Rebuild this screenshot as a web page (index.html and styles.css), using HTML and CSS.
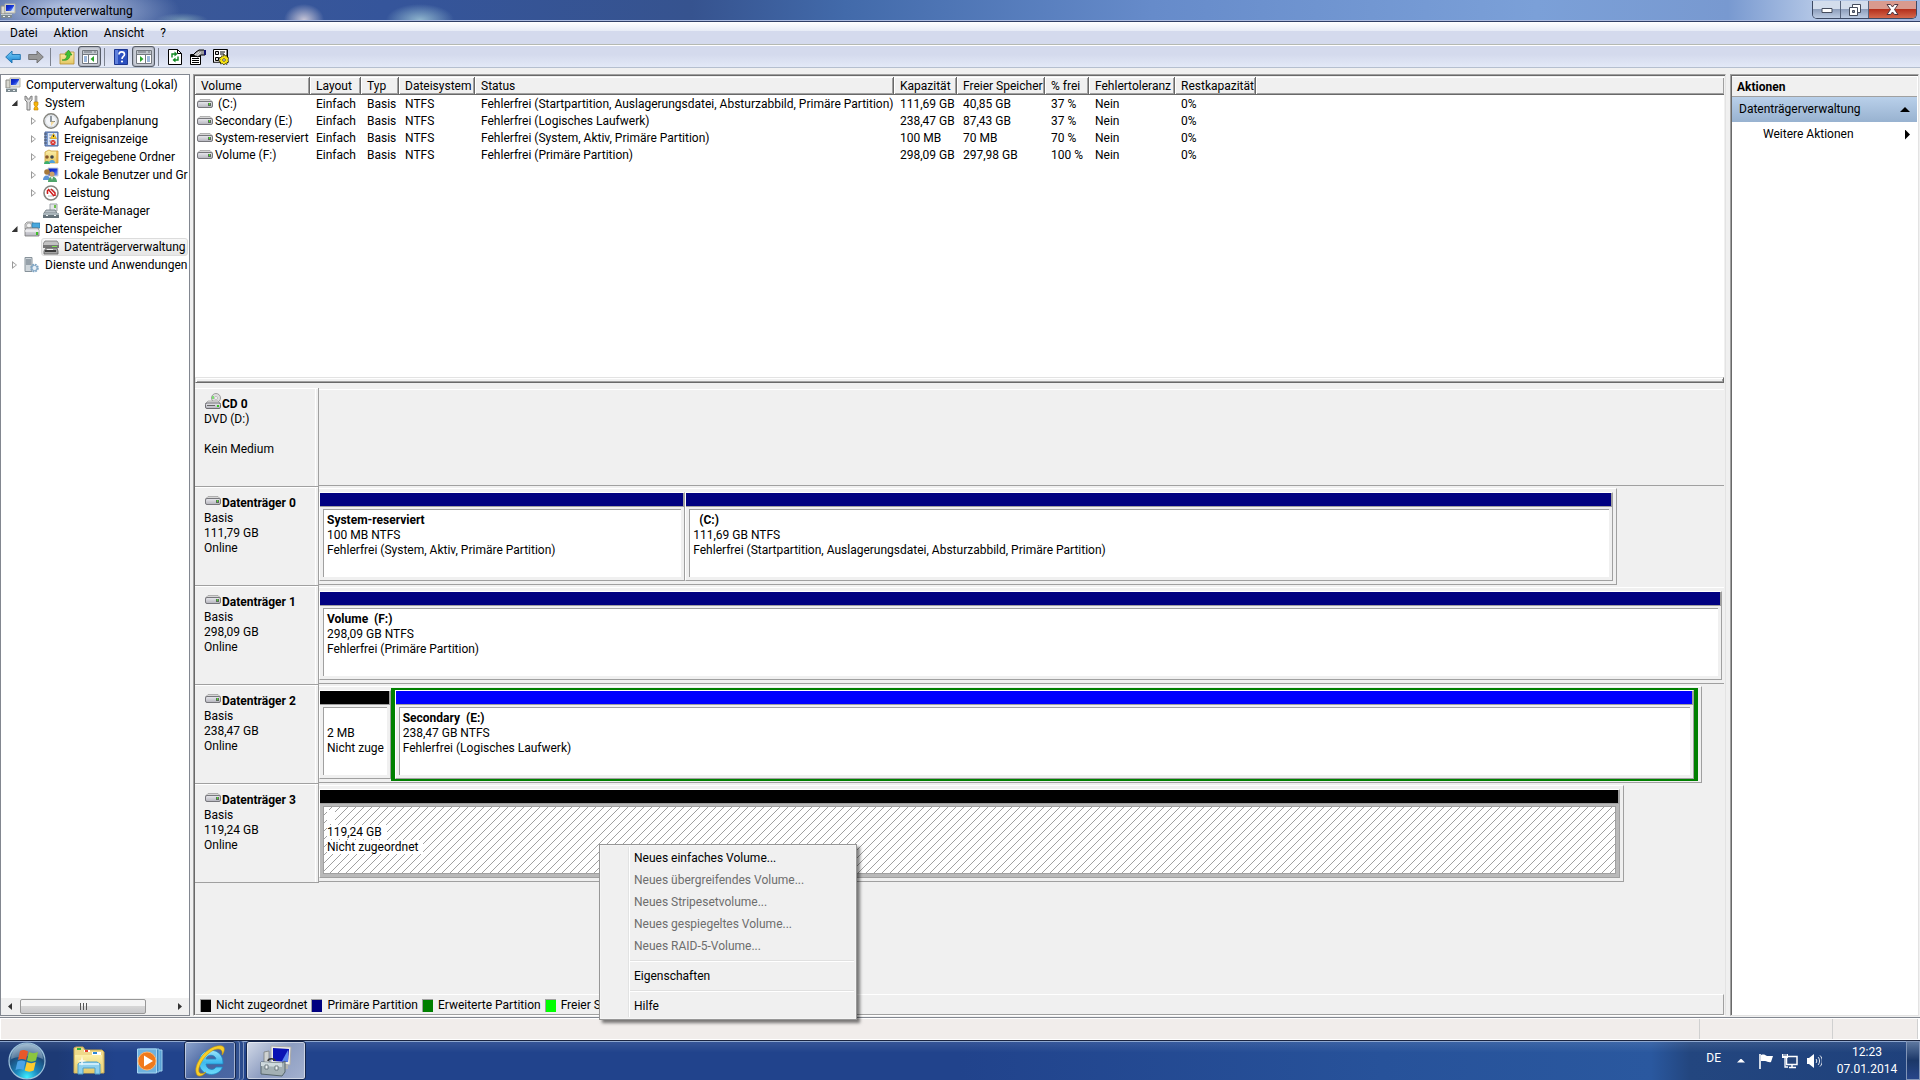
FILE: index.html
```html
<!DOCTYPE html>
<html lang="de">
<head>
  <meta charset="utf-8">
  <title>Computerverwaltung</title>
  <link rel="stylesheet" href="styles.css">
</head>
<body>
  <!-- icon sprite -->
  <svg class="sprite" aria-hidden="true">
    <defs>
      <linearGradient id="gBlue" x1="0" y1="0" x2="1" y2="1">
        <stop offset="0" stop-color="#0a1fb0"/><stop offset=".5" stop-color="#1636d8"/><stop offset="1" stop-color="#8fb4f5"/>
      </linearGradient>
      <linearGradient id="gArrow" x1="0" y1="0" x2="0" y2="1">
        <stop offset="0" stop-color="#7fd0f7"/><stop offset="1" stop-color="#1483d2"/>
      </linearGradient>
      <linearGradient id="gDrive" x1="0" y1="0" x2="0" y2="1">
        <stop offset="0" stop-color="#e9e9ee"/><stop offset="1" stop-color="#b4b4bc"/>
      </linearGradient>
      <linearGradient id="gFolder" x1="0" y1="0" x2="0" y2="1">
        <stop offset="0" stop-color="#fdf0a8"/><stop offset="1" stop-color="#e3c766"/>
      </linearGradient>
      <radialGradient id="gOrb" cx=".5" cy=".95" r=".9">
        <stop offset="0" stop-color="#3ff0ff"/><stop offset=".35" stop-color="#1b86bd"/><stop offset=".7" stop-color="#1c4c7c"/><stop offset="1" stop-color="#7fa3c0"/>
      </radialGradient>
      <linearGradient id="gIe" x1="0" y1="0" x2="0" y2="1">
        <stop offset="0" stop-color="#9fe6fb"/><stop offset=".5" stop-color="#3db9ee"/><stop offset="1" stop-color="#6fdcfa"/>
      </linearGradient>
    </defs>
    <symbol id="i-computer" viewBox="0 0 16 16">
      <path d="M1 3h4v8H1z" fill="#d8d8d0" stroke="#8a8a85"/>
      <path d="M5 1h10v9H5z" fill="#e4e4dc" stroke="#b4b4a8"/>
      <path d="M6 2h8v6H6z" fill="url(#gBlue)"/>
      <path d="M11 8l3-5v5z" fill="#c4d8fa"/>
      <path d="M1 11h11v4H1z" fill="#7d8a90"/>
      <path d="M1 11h11v1H1z" fill="#c3cdd0"/>
      <path d="M3 13h2v1H3zM8 13h2v1H8z" fill="#e8eef0"/>
    </symbol>
    <symbol id="i-tools" viewBox="0 0 16 16">
      <path d="M1 1v4l2 2v8h3V7l2-2V1L6 2v2H3V2z" fill="#dcdcdc" stroke="#7c7c7c"/>
      <path d="M11 1h2v6h-2z" fill="#b5b5b5" stroke="#8b8b8b" stroke-width=".6"/>
      <path d="M10 7h4v3l-1 1v1l1 1v2h-4v-2l1-1v-1l-1-1z" fill="#f5b50c" stroke="#c07e00" stroke-width=".6"/>
    </symbol>
    <symbol id="i-clock" viewBox="0 0 16 16">
      <circle cx="8" cy="8" r="7.2" fill="#f3f5f8" stroke="#85857f" stroke-width="1.4"/>
      <circle cx="8" cy="8" r="5.6" fill="none" stroke="#cfd5dc" stroke-width=".8"/>
      <path d="M8 3v5.500H12" fill="none" stroke="#4d5a68" stroke-width="1.200"/>
      <path d="M8 8.500h4L8 13z" fill="#f4dba0"/>
    </symbol>
    <symbol id="i-event" viewBox="0 0 16 16">
      <path d="M2 1h13v14H2z" fill="#7d9cd0" stroke="#4a659c"/>
      <path d="M5 2h9v12H5z" fill="#dfe8f6"/>
      <path d="M6 4h3M6 7h2M6 10h2" stroke="#7088b0" stroke-width=".8"/>
      <path d="M1 3h3M1 6h3M1 9h3M1 12h3" stroke="#4d5563"/>
      <path d="M10.500 2.500l3 5h-6z" fill="#ffd21f" stroke="#c28a00" stroke-width=".6"/>
      <path d="M10.500 4v2" stroke="#333"/>
      <circle cx="10" cy="11.500" r="2.600" fill="#d62a24"/>
      <path d="M9 10.500l2 2m0-2l-2 2" stroke="#fff" stroke-width=".8"/>
    </symbol>
    <symbol id="i-shared" viewBox="0 0 16 16">
      <path d="M2 3l4-2 2 1h7v12H2z" fill="url(#gFolder)" stroke="#c79f3c" stroke-width=".8"/>
      <path d="M14 2v12" stroke="#e39a2a"/>
      <circle cx="4" cy="8" r="1.800" fill="#8a5a2c"/><circle cx="9" cy="8" r="1.800" fill="#3c434a"/>
      <path d="M1 15c0-4 6-4 6 0z" fill="#3cae6d"/><path d="M6 14c0-4 6-4 6 0z" fill="#4d9fdb"/>
    </symbol>
    <symbol id="i-users" viewBox="0 0 16 16">
      <path d="M5 1h10v8H5z" fill="url(#gBlue)" stroke="#c9ced6"/>
      <circle cx="4" cy="5" r="2.800" fill="#a6793c"/><circle cx="9" cy="7" r="2.600" fill="#caa069"/>
      <path d="M0 13c0-6 7-6 7 0z" fill="#5c93d8"/>
      <path d="M5 15c0-7 9-7 9 0z" fill="#4fa56a"/><path d="M8 10l1 3 1-3z" fill="#fff"/>
    </symbol>
    <symbol id="i-perf" viewBox="0 0 16 16">
      <circle cx="8" cy="8" r="7" fill="#fff" stroke="#85857f" stroke-width="1.600"/>
      <path d="M4 8c0-5 8-5 8 0M5 11h6" fill="none" stroke="#9aa" stroke-width=".8"/>
      <path d="M5 4l6 7M4.500 5v4M8 4l4 4v3" fill="none" stroke="#cf1d1d" stroke-width="1.500"/>
    </symbol>
    <symbol id="i-device" viewBox="0 0 16 16">
      <path d="M7 1h7v7H7z" fill="#e2e5e8" stroke="#9da3a8"/>
      <path d="M11 2h2v3h-2z" fill="#6cc04a"/>
      <path d="M3 7h9l2 3H1z" fill="#b9c2c8" stroke="#6c777e" stroke-width=".8"/>
      <path d="M0 10h16v5H0z" fill="#66737b"/><path d="M0 10h16v2H0z" fill="#a8b4ba"/>
      <path d="M3 12h2v1H3zM11 12h2v1h-2z" fill="#eef2f4"/>
    </symbol>
    <symbol id="i-storage" viewBox="0 0 16 16">
      <path d="M1 3l2-2h6v7H1z" fill="#dadada" stroke="#8d8d8d" stroke-width=".8"/>
      <circle cx="5" cy="4.500" r="2.500" fill="#f4f4f4" stroke="#999" stroke-width=".7"/>
      <path d="M8 2h8v5H8z" fill="#49a8dd" stroke="#2b79a8" stroke-width=".7"/>
      <path d="M1 9l1-2h12l1 2v6H1z" fill="url(#gDrive)" stroke="#777" stroke-width=".8"/>
      <path d="M1 10h14" stroke="#fff"/><path d="M12 11h2v3h-2z" fill="#3fbf2a"/>
    </symbol>
    <symbol id="i-diskmgmt" viewBox="0 0 16 16">
      <path d="M2 2h12l2 3v3H0V5z" fill="#c2c2c2" stroke="#777" stroke-width=".8"/>
      <path d="M0 6h16v3H0z" fill="#777"/><path d="M9 7h5v1H9z" fill="#7fe04f"/>
      <path d="M3 9h11l1 3v3H1v-3z" fill="#a5a5a5" stroke="#5b5b5b" stroke-width=".8"/>
      <path d="M2 11h11v2H2z" fill="#3d3d3d"/><path d="M4 10h6v1H4z" fill="#f0f0f0"/>
    </symbol>
    <symbol id="i-services" viewBox="0 0 16 16">
      <path d="M1 0.500h7v14H1z" fill="#cfd6db" stroke="#87929a"/>
      <path d="M2 3h5M2 5h5M2 7h5" stroke="#5f6d78"/>
      <circle cx="10.500" cy="11" r="3.200" fill="none" stroke="#7fa5c4" stroke-width="2.200" stroke-dasharray="1.700 .8"/>
      <circle cx="10.500" cy="11" r="2.600" fill="#e8f0f7" stroke="#7fa5c4"/>
    </symbol>
    <symbol id="i-drive" viewBox="0 0 16 9">
      <path d="M3 .5h10l2.500 2.500H.5z" fill="#d6d6d6" stroke="#a2a2a2" stroke-width=".8"/>
      <rect x=".5" y="2.500" width="15" height="6" rx="1.500" fill="url(#gDrive)" stroke="#77777c"/>
      <path d="M11 4h3v3h-3z" fill="#5c6b5c"/><path d="M12 4h1v2h-1z" fill="#4ee02c"/>
    </symbol>
    <symbol id="i-cd" viewBox="0 0 16 16">
      <circle cx="11" cy="5" r="4.500" fill="#dedede" stroke="#9d9d9d"/>
      <circle cx="11" cy="5" r="1.500" fill="#fff" stroke="#aaa" stroke-width=".7"/>
      <path d="M7 3h2v3H7z" fill="#7fdc74"/>
      <path d="M3 8h10l3 3H0z" fill="#e0e0e0" stroke="#999" stroke-width=".7"/>
      <rect x=".5" y="10" width="15" height="5.500" rx="1.500" fill="url(#gDrive)" stroke="#6d6d72"/>
      <path d="M2 12h8v1H2z" fill="#666"/><path d="M12 12h2v2h-2z" fill="#39c225"/>
    </symbol>
    <symbol id="i-back" viewBox="0 0 16 14">
      <path d="M.7 7L7 1v3.500h8.300v5H7V13z" fill="url(#gArrow)" stroke="#1c6fae" stroke-width=".9"/>
    </symbol>
    <symbol id="i-forward" viewBox="0 0 16 14">
      <path d="M15.300 7L9 1v3.500H.7v5H9V13z" fill="#989898" stroke="#6d6d6d" stroke-width=".9"/>
    </symbol>
    <symbol id="i-up" viewBox="0 0 16 16">
      <path d="M1 5h5l1-2h8v12H1z" fill="url(#gFolder)" stroke="#b88f32" stroke-width=".8"/>
      <path d="M3 11c3 0 5-2 5-5H6l3.500-5L13 6h-2c0 4-3 6-8 5z" fill="#3fc234" stroke="#1d8a1c" stroke-width=".6"/>
    </symbol>
    <symbol id="i-treepane" viewBox="0 0 16 14">
      <path d="M.5 .5h15v13H.5z" fill="#fff" stroke="#73787f"/>
      <path d="M1 1h14v3H1z" fill="#c0c5cc"/><path d="M2 2h8M12 2h2" stroke="#70757c"/>
      <path d="M6.500 4v10M1 4.500h14" stroke="#73787f"/>
      <path d="M2 7h3M2 9h3M2 11h3" stroke="#3b70b8"/><path d="M12 6v6L8.500 9z" fill="#2aa32a"/>
    </symbol>
    <symbol id="i-actpane" viewBox="0 0 16 14">
      <path d="M.5 .5h15v13H.5z" fill="#fff" stroke="#73787f"/>
      <path d="M1 1h14v3H1z" fill="#c0c5cc"/><path d="M2 2h8M12 2h2" stroke="#70757c"/>
      <path d="M9.500 4v10M1 4.500h14" stroke="#73787f"/>
      <path d="M11 7h3M11 9h3M11 11h3" stroke="#3b70b8"/><path d="M4 6v6l3.500-3z" fill="#2aa32a"/>
    </symbol>
    <symbol id="i-help" viewBox="0 0 14 16">
      <path d="M.5 .5h13v15H.5z" fill="#2b50c0" stroke="#1c3690"/><path d="M1 1h3v14H1z" fill="#5f80dc"/>
      <path d="M5 5.500c0-3.500 5.500-3.500 5.500 0 0 2-2.500 2-2.500 4.500" fill="none" stroke="#fff" stroke-width="1.600"/>
      <circle cx="8" cy="12.500" r="1.100" fill="#fff"/>
    </symbol>
    <symbol id="i-refresh" viewBox="0 0 14 16">
      <path d="M.5 .5h9l4 4v11H.5z" fill="#fff" stroke="#000"/><path d="M9.500 .5v4h4" fill="none" stroke="#000"/>
      <path d="M4 8.500V5h3M10 7.500V11H7" fill="none" stroke="#108a22" stroke-width="1.400"/>
      <path d="M6.500 2.500v5L9.500 5zM7.500 8.500v5l-3-2.500z" fill="#108a22"/>
    </symbol>
    <symbol id="i-props" viewBox="0 0 16 16">
      <path d="M.5 5.500h10v10H.5z" fill="#fff" stroke="#000"/><path d="M.5 6h10v2H.5z" fill="#000"/>
      <path d="M2 9.500h7M2 11.500h7M2 13.500h7" stroke="#000"/>
      <path d="M3 6l3-3 3-2h5l1 1v4h-4l-3 2-3-1z" fill="#9b9b9b" stroke="#000"/>
      <path d="M5 6l4-3M7 6.500l4-3" stroke="#fff" stroke-width=".8"/><path d="M14 1h2v5h-2z" fill="#10106e"/>
    </symbol>
    <symbol id="i-settings" viewBox="0 0 16 16">
      <path d="M.5 .5h14v13H.5z" fill="#fff" stroke="#000"/><path d="M13.500 1v12H1" fill="none" stroke="#8a8a8a"/>
      <path d="M2.500 2.500h3v3h-3zM2.500 8.500h3v3h-3z" fill="#ddd" stroke="#000"/>
      <path d="M7 3h5M7 5h4M7 9h2" stroke="#000"/>
      <path d="M11 5l1 2 2-1v2l2 1-1 2 1 2-2 .500v2l-2-1-1 1.500-1.500-1.500-2 .500v-2l-2-1 1.500-1.500L6 8.500h2L9 6.500l1 1z" fill="#f7e312" stroke="#000" stroke-width=".6"/>
      <circle cx="11" cy="11" r="1.300" fill="#fff" stroke="#000" stroke-width=".6"/>
    </symbol>
    <symbol id="i-orb" viewBox="0 0 38 38">
      <circle cx="19" cy="19" r="18" fill="url(#gOrb)" stroke="#9fc3dc" stroke-width="1.200"/>
      <path d="M3 17C4-3 34-3 35 17 26 13 12 14 3 17z" fill="#fff" opacity=".25"/>
      <path d="M12 9c3-1.500 5-1 8 .5l-2 8.500c-3-1.500-5-1.500-8 0z" fill="#e8582a"/>
      <path d="M21 10c3 1.500 6 1.500 9 0l-2 8.500c-3 1.500-6 1.500-9 0z" fill="#8cc63e"/>
      <path d="M9.500 19.500c3-1.500 5-1.500 8 0l-2 8.500c-3-1.500-5-1.500-8 0z" fill="#4ba3e6"/>
      <path d="M18.700 20c3 1.500 6 1.500 9 0l-2 8.500c-3 1.500-6 1.500-9 0z" fill="#fccb2f"/>
    </symbol>
    <symbol id="i-explorer" viewBox="0 0 32 29">
      <path d="M1 2l2-1h7l2 3h17l2 2v21H1z" fill="#efd98a" stroke="#c9a94f"/>
      <path d="M4 2h4v2H4z" fill="#30b53b"/><path d="M11 4h6v2h-6z" fill="#fff"/><path d="M12 4h3v2h-3z" fill="#e4402c"/>
      <path d="M19 6h9v3h-9z" fill="#fff"/><path d="M20 6h4v2h-4z" fill="#2c87d8"/>
      <path d="M2 9h27v18H2z" fill="url(#gFolder)"/>
      <path d="M5 28V18l3-2h16l3 2v10h-5v-6H10v6z" fill="#8ed0ee" stroke="#4f9fc9"/>
      <path d="M6 18h20" stroke="#dff5ff" stroke-width="1.500"/>
      <path d="M9 10l1 4 4 1-4 1-1 4-1-4-4-1 4-1z" fill="#fff" opacity=".8"/>
    </symbol>
    <symbol id="i-media" viewBox="0 0 26 26">
      <path d="M6 2h19v21H6z" fill="#5aa2d4" stroke="#9fd0ee"/><path d="M3 1h19v23H3z" fill="#3d88c2" stroke="#8dc4e8"/>
      <path d="M.5 1h19v24H.5z" fill="#6fb2de" stroke="#a7d6f2"/>
      <circle cx="10" cy="13" r="9" fill="#f07a1c" stroke="#ffb36b"/>
      <path d="M7 7.500v11l9-5.500z" fill="#fff"/>
    </symbol>
    <symbol id="i-ie" viewBox="0 0 32 32">
      <path d="M29 19H12c.5 6 8 7 10 3h6.500C25 33 5 32 5 17 5 1 30 1 29 19zM12 14h10c-1-5-9-5-10 0z" fill="url(#gIe)" stroke="#1c86c4" stroke-width=".8"/>
      <path d="M3 30C-3 20 15-2 28 1c4 1 2 7 0 9 1-4-1-6-4-6C15 4 3 20 5 27c1 2 4 2 7 0-3 4-7 5-9 3z" fill="#f8cf2a" stroke="#c99708" stroke-width=".6"/>
    </symbol>
    <symbol id="i-mmc" viewBox="0 0 32 32">
      <path d="M4 7l5-1v13H4z" fill="#cfd2d2" stroke="#7b8080" stroke-width=".8"/>
      <path d="M11 1l20 1-1 18-19-2z" fill="#ecece6" stroke="#aaa"/>
      <path d="M13 3l16 1-1 13-15-1z" fill="#0a12b4"/><path d="M22 16l6-11v12z" fill="#5a84ee"/>
      <path d="M20 20h8v4h-8z" fill="#b5b5b0"/>
      <path d="M8 16c0-3 7-3 7 0" fill="none" stroke="#333" stroke-width="1.500"/>
      <path d="M1 17l21 1 3-2v11l-3 4-21-2z" fill="#a3b0b4" stroke="#56666c"/>
      <path d="M1 17l21 1v4L1 21z" fill="#cfdadd"/><path d="M5 20h3v4H5zM15 21h3v4h-3z" fill="#f2f6f7" stroke="#5c6a70" stroke-width=".8"/>
    </symbol>
    <symbol id="i-flag" viewBox="0 0 16 16">
      <path d="M2 1v15" stroke="#fff" stroke-width="1.600"/><path d="M3 2c3-1 4 0 6 1h6l-2 6c-2 1-4-1-6-1H3z" fill="#fff"/>
    </symbol>
    <symbol id="i-net" viewBox="0 0 16 16">
      <path d="M4.500 3.500h10.500v8H4.500z" fill="#27467a" stroke="#fff" stroke-width="1.500"/>
      <path d="M7 14.500h7M10 12v2" stroke="#fff" stroke-width="1.500"/>
      <path d="M0 1h6v4H0z" fill="#fff"/><path d="M3 5v9h3" fill="none" stroke="#fff" stroke-width="1.300"/><path d="M2 1v2m2-2v2" stroke="#27467a"/>
    </symbol>
    <symbol id="i-sound" viewBox="0 0 16 16">
      <path d="M1 5h2l5-4v14l-5-4H1z" fill="#fff"/>
      <path d="M10 6c1 1 1 3 0 4M12 4c2 2 2 6 0 8M14 2.500c3 3 3 8 0 11" fill="none" stroke="#fff" stroke-width=".9"/>
    </symbol>
  </svg>

  <header class="titlebar">
    <svg class="icon"><use href="#i-computer"/></svg>
    <h1 class="title">Computerverwaltung</h1>
    <div class="window-buttons">
      <button class="win-btn" aria-label="Minimieren"><svg width="12" height="8"><path d="M1 2.500h10v4H1z" fill="#fff" stroke="#454c5c"/></svg></button>
      <button class="win-btn" aria-label="Verkleinern"><svg width="12" height="12"><path d="M3.500 .5h8v8h-8z" fill="#fff" stroke="#454c5c"/><path d="M.5 3.500h8v8h-8z" fill="#fff" stroke="#454c5c"/><path d="M3.500 6.500h2v2h-2z" fill="#8a93a5" stroke="#454c5c"/></svg></button>
      <button class="win-btn close" aria-label="Schließen"><svg width="13" height="11"><path d="M1 .5h3.500l2 2.500 2-2.500H12L8.500 5.500l3.500 5H8.500l-2-2.500-2 2.500H1l3.500-5z" fill="#fff" stroke="#4d3540"/></svg></button>
    </div>
  </header>

  <nav class="menubar">
    <button>Datei</button>
    <button>Aktion</button>
    <button>Ansicht</button>
    <button>?</button>
  </nav>

  <div class="toolbar">
    <button aria-label="Zurück"><svg class="icon"><use href="#i-back"/></svg></button>
    <button aria-label="Vorwärts"><svg class="icon"><use href="#i-forward"/></svg></button>
    <span class="sep"></span>
    <button aria-label="Nach oben"><svg class="icon"><use href="#i-up"/></svg></button>
    <button class="pressed" aria-label="Konsolenstruktur"><svg class="icon"><use href="#i-treepane"/></svg></button>
    <span class="sep"></span>
    <button aria-label="Hilfe"><svg class="icon"><use href="#i-help"/></svg></button>
    <button class="pressed" aria-label="Aktionsbereich"><svg class="icon"><use href="#i-actpane"/></svg></button>
    <span class="sep"></span>
    <button aria-label="Aktualisieren"><svg class="icon"><use href="#i-refresh"/></svg></button>
    <button aria-label="Eigenschaften"><svg class="icon"><use href="#i-props"/></svg></button>
    <button aria-label="Einstellungen"><svg class="icon"><use href="#i-settings"/></svg></button>
  </div>

  <main class="workspace">
    <aside class="tree-pane">
      <ul class="tree">
        <li class="root"><svg class="icon"><use href="#i-computer"/></svg><a href="#">Computerverwaltung (Lokal)</a></li>
        <li class="level1"><span class="arrow open"></span><svg class="icon"><use href="#i-tools"/></svg><a href="#">System</a></li>
        <li class="level2"><span class="arrow"></span><svg class="icon"><use href="#i-clock"/></svg><a href="#">Aufgabenplanung</a></li>
        <li class="level2"><span class="arrow"></span><svg class="icon"><use href="#i-event"/></svg><a href="#">Ereignisanzeige</a></li>
        <li class="level2"><span class="arrow"></span><svg class="icon"><use href="#i-shared"/></svg><a href="#">Freigegebene Ordner</a></li>
        <li class="level2"><span class="arrow"></span><svg class="icon"><use href="#i-users"/></svg><a href="#">Lokale Benutzer und Gruppen</a></li>
        <li class="level2"><span class="arrow"></span><svg class="icon"><use href="#i-perf"/></svg><a href="#">Leistung</a></li>
        <li class="level2 leaf"><svg class="icon"><use href="#i-device"/></svg><a href="#">Geräte-Manager</a></li>
        <li class="level1"><span class="arrow open"></span><svg class="icon"><use href="#i-storage"/></svg><a href="#">Datenspeicher</a></li>
        <li class="level2 leaf selected"><svg class="icon"><use href="#i-diskmgmt"/></svg><a href="#">Datenträgerverwaltung</a></li>
        <li class="level1"><span class="arrow"></span><svg class="icon"><use href="#i-services"/></svg><a href="#">Dienste und Anwendungen</a></li>
      </ul>
      <div class="scrollbar">
        <button class="scroll-left" aria-label="Nach links"></button>
        <div class="track"><div class="thumb"><i></i><i></i><i></i></div></div>
        <button class="scroll-right" aria-label="Nach rechts"></button>
      </div>
    </aside>

    <section class="center-pane">
      <div class="volume-list">
        <table>
          <colgroup>
            <col class="c-volume"><col class="c-layout"><col class="c-type"><col class="c-fs"><col class="c-status">
            <col class="c-cap"><col class="c-free"><col class="c-pct"><col class="c-fault"><col class="c-rest"><col>
          </colgroup>
          <thead>
            <tr><th>Volume</th><th>Layout</th><th>Typ</th><th>Dateisystem</th><th>Status</th><th>Kapazität</th><th>Freier Speicher</th><th>% frei</th><th>Fehlertoleranz</th><th>Restkapazität</th><th></th></tr>
          </thead>
          <tbody>
            <tr><td><svg class="drive"><use href="#i-drive"/></svg>&nbsp;(C:)</td><td>Einfach</td><td>Basis</td><td>NTFS</td><td>Fehlerfrei (Startpartition, Auslagerungsdatei, Absturzabbild, Primäre Partition)</td><td>111,69 GB</td><td>40,85 GB</td><td>37 %</td><td>Nein</td><td>0%</td><td></td></tr>
            <tr><td><svg class="drive"><use href="#i-drive"/></svg>Secondary (E:)</td><td>Einfach</td><td>Basis</td><td>NTFS</td><td>Fehlerfrei (Logisches Laufwerk)</td><td>238,47 GB</td><td>87,43 GB</td><td>37 %</td><td>Nein</td><td>0%</td><td></td></tr>
            <tr><td><svg class="drive"><use href="#i-drive"/></svg>System-reserviert</td><td>Einfach</td><td>Basis</td><td>NTFS</td><td>Fehlerfrei (System, Aktiv, Primäre Partition)</td><td>100 MB</td><td>70 MB</td><td>70 %</td><td>Nein</td><td>0%</td><td></td></tr>
            <tr><td><svg class="drive"><use href="#i-drive"/></svg>Volume (F:)</td><td>Einfach</td><td>Basis</td><td>NTFS</td><td>Fehlerfrei (Primäre Partition)</td><td>298,09 GB</td><td>297,98 GB</td><td>100 %</td><td>Nein</td><td>0%</td><td></td></tr>
          </tbody>
        </table>
      </div>
      <div class="splitter"></div>

      <div class="disks">
        <div class="disk">
          <div class="disk-label">
            <h2><svg class="cd"><use href="#i-cd"/></svg>CD 0</h2>
            <p>DVD (D:)</p><p>&nbsp;</p><p>Kein Medium</p>
          </div>
          <div class="disk-area"><div class="disk-graph" style="width:100%"></div></div>
        </div>
        <div class="disk">
          <div class="disk-label">
            <h2><svg class="drive"><use href="#i-drive"/></svg>Datenträger 0</h2>
            <p>Basis</p><p>111,79 GB</p><p>Online</p>
          </div>
          <div class="disk-area"><div class="disk-graph" style="width:92.4%">
            <div class="part primary" style="width:28.3%">
              <div class="bar"></div>
              <div class="box"><div class="info"><h3>System-reserviert</h3><p>100 MB NTFS</p><p>Fehlerfrei (System, Aktiv, Primäre Partition)</p></div></div>
            </div>
            <div class="part primary" style="width:71.7%">
              <div class="bar"></div>
              <div class="box"><div class="info"><h3>&nbsp; (C:)</h3><p>111,69 GB NTFS</p><p>Fehlerfrei (Startpartition, Auslagerungsdatei, Absturzabbild, Primäre Partition)</p></div></div>
            </div>
          </div></div>
        </div>
        <div class="disk">
          <div class="disk-label">
            <h2><svg class="drive"><use href="#i-drive"/></svg>Datenträger 1</h2>
            <p>Basis</p><p>298,09 GB</p><p>Online</p>
          </div>
          <div class="disk-area"><div class="disk-graph full" style="width:100%">
            <div class="part primary" style="width:100%">
              <div class="bar"></div>
              <div class="box"><div class="info"><h3>Volume&nbsp; (F:)</h3><p>298,09 GB NTFS</p><p>Fehlerfrei (Primäre Partition)</p></div></div>
            </div>
          </div></div>
        </div>
        <div class="disk">
          <div class="disk-label">
            <h2><svg class="drive"><use href="#i-drive"/></svg>Datenträger 2</h2>
            <p>Basis</p><p>238,47 GB</p><p>Online</p>
          </div>
          <div class="disk-area"><div class="disk-graph" style="width:98.4%">
            <div class="part free" style="width:5.2%">
              <div class="bar"></div>
              <div class="box"><div class="info"><h3>&nbsp;</h3><p>2 MB</p><p>Nicht zugeordnet</p></div></div>
            </div>
            <div class="extended" style="width:94.8%">
              <div class="part logical" style="width:100%">
                <div class="bar"></div>
                <div class="box"><div class="info"><h3>Secondary&nbsp; (E:)</h3><p>238,47 GB NTFS</p><p>Fehlerfrei (Logisches Laufwerk)</p></div></div>
              </div>
            </div>
          </div></div>
        </div>
        <div class="disk">
          <div class="disk-label">
            <h2><svg class="drive"><use href="#i-drive"/></svg>Datenträger 3</h2>
            <p>Basis</p><p>119,24 GB</p><p>Online</p>
          </div>
          <div class="disk-area"><div class="disk-graph" style="width:92.9%">
            <div class="part free active" style="width:100%">
              <div class="bar"></div>
              <div class="box"><div class="info"><h3><span>&nbsp;</span></h3><p><span>119,24 GB</span></p><p><span>Nicht zugeordnet</span></p></div></div>
            </div>
          </div></div>
        </div>
      </div>

      <ul class="legend">
        <li><i class="swatch black"></i>Nicht zugeordnet</li>
        <li><i class="swatch navy"></i>Primäre Partition</li>
        <li><i class="swatch green"></i>Erweiterte Partition</li>
        <li><i class="swatch lime"></i>Freier Speicherplatz</li>
      </ul>
    </section>

    <aside class="actions-pane">
      <h2>Aktionen</h2>
      <button class="group">Datenträgerverwaltung<span class="tri-up"></span></button>
      <button class="more">Weitere Aktionen<span class="tri-right"></span></button>
    </aside>
  </main>

  <footer class="statusbar"><span class="cell wide"></span><span class="cell mid"></span><span class="cell small"></span></footer>

  <div class="taskbar">
    <button class="start" aria-label="Start"><svg width="38" height="38"><use href="#i-orb"/></svg></button>
    <button class="task" aria-label="Explorer"><svg width="32" height="29"><use href="#i-explorer"/></svg></button>
    <button class="task" aria-label="Media Player"><svg width="26" height="26"><use href="#i-media"/></svg></button>
    <button class="task running stacked" aria-label="Internet Explorer"><svg width="32" height="32"><use href="#i-ie"/></svg></button>
    <button class="task running current" aria-label="Computerverwaltung"><svg width="32" height="32"><use href="#i-mmc"/></svg></button>
    <div class="tray">
      <span class="lang">DE</span>
      <button class="tray-more" aria-label="Ausgeblendete Symbole"></button>
      <svg class="icon"><use href="#i-flag"/></svg>
      <svg class="icon"><use href="#i-net"/></svg>
      <svg class="icon"><use href="#i-sound"/></svg>
      <div class="clock"><time>12:23</time><time>07.01.2014</time></div>
      <button class="show-desktop" aria-label="Desktop anzeigen"></button>
    </div>
  </div>

  <div class="context-menu">
    <button>Neues einfaches Volume...</button>
    <button disabled>Neues übergreifendes Volume...</button>
    <button disabled>Neues Stripesetvolume...</button>
    <button disabled>Neues gespiegeltes Volume...</button>
    <button disabled>Neues RAID-5-Volume...</button>
    <hr>
    <button>Eigenschaften</button>
    <hr>
    <button>Hilfe</button>
  </div>
</body>
</html>
```
FILE: styles.css
```css
* {
  box-sizing: border-box;
}

body {
  margin: 0;
  height: 100vh;
  display: flex;
  flex-direction: column;
  overflow: hidden;
  background-color: #f0f0f0;
  color: #000;
  font-family: Roboto, "Open Sans", sans-serif;
  font-size: 12px;
  line-height: 15px;
}

h1, h2, h3, p, ul {
  margin: 0;
  padding: 0;
  font-size: 12px;
}

ul {
  list-style: none;
}

button {
  border: 0;
  padding: 0;
  background: none;
  color: inherit;
  font: inherit;
}

a {
  color: inherit;
  text-decoration: none;
}

.sprite {
  position: absolute;
  width: 0;
  height: 0;
}

.icon {
  width: 16px;
  height: 16px;
  flex: none;
}

.drive {
  width: 16px;
  height: 9px;
}

/* title bar */
.titlebar {
  display: flex;
  align-items: center;
  height: 22px;
  flex: none;
  padding: 1px 3px 0 0;
  border-bottom: 1px solid #2f3f66;
  box-shadow: inset 0 -1px #a9b9de;
  background:
    radial-gradient(ellipse 110px 34px at 70px 11px, rgba(180, 195, 226, .9) 20%, transparent),
    radial-gradient(ellipse 26px 7px at 182px 20px, rgba(140, 175, 190, .7), transparent),
    radial-gradient(ellipse 20px 16px at 304px 20px, rgba(235, 225, 230, .8), transparent),
    radial-gradient(ellipse 34px 16px at 420px 20px, rgba(165, 205, 218, .8), transparent),
    linear-gradient(90deg, #3e5a96 0%, #35559b 20%, #36538f 36%, #426aaa 44%, #668bca 60%, #7ba0d8 80%, #7899d0 90%, #b9cbe8 95%, #9fb7df 100%);
}

.title {
  margin-left: 5px;
  font-weight: normal;
}

.window-buttons {
  display: flex;
  align-self: flex-start;
  height: 18px;
  margin-left: auto;
  border: 1px solid #3c4963;
  border-top: 0;
  border-radius: 0 0 5px 5px;
  overflow: hidden;
}

.win-btn {
  display: flex;
  align-items: center;
  justify-content: center;
  width: 28px;
  border-right: 1px solid #56637c;
  background: linear-gradient(#d3ddec 50%, #8e9fbc 50%, #bccbe2);
}

.win-btn.close {
  width: 47px;
  border-right: 0;
  background: linear-gradient(#d99a8e 45%, #b5311d 50%, #d4684c);
}

/* menu bar */
.menubar {
  display: flex;
  align-items: center;
  height: 24px;
  flex: none;
  padding-left: 2px;
  border-bottom: 1px solid #fff;
  box-shadow: inset 0 -1px #b5b9b2;
  background: linear-gradient(#fff, #e6ebf6 40%, #d4daed 40%);
}

.menubar button {
  padding: 0 8px;
}

/* tool bar */
.toolbar {
  display: flex;
  align-items: center;
  height: 22px;
  flex: none;
  padding-left: 1px;
  border-bottom: 1px solid #b5bfcf;
  background: linear-gradient(#d4daed 40%, #e3e9f7);
}

.toolbar button {
  display: flex;
  align-items: center;
  justify-content: center;
  width: 23px;
  height: 21px;
}

.toolbar .pressed {
  border: 1px solid #565c68;
  border-radius: 3px;
  background-color: #ccd0da;
  box-shadow: inset 0 0 2px #6f7683;
}

.toolbar .sep {
  width: 1px;
  height: 18px;
  margin: 0 4px 0 3px;
  background-color: #7d8390;
}

/* main panes */
.workspace {
  display: flex;
  flex: 1;
  min-height: 0;
  padding: 6px 1px 1px 0;
}

.tree-pane {
  display: flex;
  flex-direction: column;
  width: 190px;
  flex: none;
  border: 1px solid #828790;
  background-color: #fff;
}

.tree {
  flex: 1;
  padding-top: 1px;
  margin-right: 1px;
  overflow: hidden;
}

.tree li {
  display: flex;
  align-items: center;
  height: 18px;
  white-space: nowrap;
}

.tree a {
  margin-left: 5px;
}

.tree .root {
  padding-left: 4px;
}

.tree .level1 {
  padding-left: 8px;
}

.tree .level2 {
  padding-left: 27px;
}

.tree .leaf {
  padding-left: 42px;
}

.tree .selected {
  margin-left: 40px;
  padding-left: 1px;
  border: 1px solid #dcdcdc;
  border-radius: 3px;
  background: linear-gradient(#f8f8f8, #e6e6e6);
}

.arrow {
  display: flex;
  justify-content: center;
  width: 11px;
  flex: none;
  margin-right: 4px;
}

.arrow::before {
  content: "";
  width: 5px;
  height: 8px;
  background-color: #9a9a9a;
  clip-path: polygon(0 0, 100% 50%, 0 100%, 0 0, 1px 2px, 1px 6px, 4px 50%, 1px 2px);
}

.arrow.open::before {
  width: 6px;
  height: 6px;
  background-color: #333;
  clip-path: polygon(100% 0, 100% 100%, 0 100%);
}

.scrollbar {
  display: flex;
  height: 17px;
  background-color: #f0f0f0;
}

.scrollbar button {
  width: 18px;
  display: flex;
  align-items: center;
  justify-content: center;
}

.scrollbar button::before {
  content: "";
  width: 4px;
  height: 7px;
  background-color: #333;
  clip-path: polygon(0 50%, 100% 0, 100% 100%);
}

.scrollbar .scroll-right::before {
  clip-path: polygon(100% 50%, 0 0, 0 100%);
}

.track {
  flex: 1;
  padding: 1px;
}

.thumb {
  display: flex;
  align-items: center;
  justify-content: center;
  gap: 2px;
  width: 84%;
  height: 15px;
  border: 1px solid #979797;
  border-radius: 2px;
  background: linear-gradient(#f4f4f4 45%, #d6d6d6 50%, #c8c8cb);
}

.thumb i {
  width: 1px;
  height: 7px;
  background-color: #555;
}

.center-pane {
  display: flex;
  flex-direction: column;
  flex: 1;
  min-width: 0;
  margin: 0 4px 0 3px;
  border: 1px solid;
  border-color: #a0a0a0 #e3e3e3 #fff #a0a0a0;
  box-shadow: inset 1px 1px #696969;
  padding: 2px 1px 0 1px;
}

.volume-list {
  height: 300px;
  flex: none;
  overflow: hidden;
  background-color: #fff;
}

.volume-list table {
  width: 100%;
  table-layout: fixed;
  border-collapse: separate;
  border-spacing: 0;
}

.c-volume { width: 115px; }
.c-layout { width: 51px; }
.c-type { width: 38px; }
.c-fs { width: 76px; }
.c-status { width: 419px; }
.c-cap { width: 63px; }
.c-free { width: 88px; }
.c-pct { width: 44px; }
.c-fault { width: 86px; }
.c-rest { width: 81px; }

.volume-list th {
  height: 18px;
  padding: 1px 0 0 6px;
  background-color: #f0f0f0;
  border-bottom: 1px solid #696969;
  border-right: 1px solid #696969;
  box-shadow: inset 1px 1px #fff, inset -1px -1px #a0a0a0;
  font-weight: normal;
  line-height: 15px;
  text-align: left;
  white-space: nowrap;
}

.volume-list th:last-child {
  border-right: 0;
}

.volume-list td {
  height: 17px;
  padding: 2px 0 0 6px;
  line-height: 15px;
  white-space: nowrap;
}

.volume-list td:first-child {
  padding-left: 2px;
}

.volume-list .drive {
  margin-right: 2px;
}

.splitter {
  height: 6px;
  flex: none;
  border: 1px solid;
  border-color: #e3e3e3 #696969 #696969 #e3e3e3;
  box-shadow: inset 1px 1px #fff, inset -1px -1px #a0a0a0;
}

/* disk rows */
.disks {
  flex: 1;
  min-height: 0;
  padding-top: 5px;
}

.disk {
  display: flex;
  height: 99px;
}

.disk-label {
  width: 123px;
  flex: none;
  padding: 8px 0 0 9px;
  border-top: 1px solid #fff;
  border-bottom: 1px solid #a0a0a0;
  box-shadow: inset -2px 0 #f0f0f0, inset -3px 0 #fff;
}

.disk-label h2 {
  display: flex;
  height: 15px;
}

.disk-label .drive {
  margin: 0 1px;
}

.disk-label .cd {
  width: 16px;
  height: 16px;
  margin: -4px 1px 0;
}

.disk-area {
  flex: 1;
  min-width: 0;
  padding: 1px 0;
  border-left: 1px solid #a0a0a0;
}

.disk-graph {
  display: flex;
  height: 97px;
  padding: 3px 3px 3px 0;
  border: 1px solid;
  border-color: #fff #a0a0a0 #a0a0a0 transparent;
  border-left: 0;
}

.disk:first-child .disk-graph,
.disk-graph.full {
  padding-right: 2px;
  border-right: 0;
}

.part {
  display: flex;
  flex-direction: column;
  min-width: 0;
  border: 1px solid;
  border-color: #fff #a0a0a0 #a0a0a0 #fff;
  background-color: #f0f0f0;
}

.bar {
  height: 14px;
  flex: none;
  border-bottom: 1px solid #a0a0a0;
  border-right: 1px solid #a0a0a0;
}

.primary .bar { background-color: #000080; }
.free .bar { background-color: #000; }
.logical .bar { background-color: #0000ff; }

.box {
  display: flex;
  flex: 1;
  padding: 2px 3px 3px 3px;
}

.info {
  flex: 1;
  min-width: 0;
  padding: 3px 3px 0;
  overflow: hidden;
  border-top: 1px solid #a0a0a0;
  border-left: 1px solid #a0a0a0;
  background-color: #fff;
  white-space: nowrap;
}

.info p {
  overflow: hidden;
}

.extended {
  display: flex;
  margin: -2px 0;
  padding: 2px 4px;
  background-color: #008000;
}

.active .box {
  background-color: #b9b9b9;
}

.active .info {
  border: 1px solid #a0a0a0;
  background: linear-gradient(135deg, #fff 47%, #a0a0a0 47% 53%, #fff 53%) 0 0 / 8px 8px;
}

.active .info span {
  background-color: #fff;
  padding-right: 5px;
}

/* legend */
.legend {
  display: flex;
  align-items: center;
  height: 21px;
  flex: none;
  padding: 1px 0 0 4px;
  gap: 4px;
  border: 1px solid;
  border-color: #fff #a0a0a0 #a0a0a0 transparent;
}

.legend li {
  display: flex;
  align-items: center;
  gap: 5px;
}

.swatch {
  width: 11px;
  height: 13px;
  border-top: 1px solid #a0a0a0;
  border-left: 1px solid #a0a0a0;
}

.swatch.black { background-color: #000; }
.swatch.navy { background-color: #000080; }
.swatch.green { background-color: #008000; }
.swatch.lime { background-color: #00ff00; }

/* actions */
.actions-pane {
  width: 189px;
  flex: none;
  padding: 2px 1px 0;
  border: 1px solid;
  border-color: #a0a0a0 #e3e3e3 #e3e3e3 #a0a0a0;
  box-shadow: inset 1px 1px #696969;
  background-color: #fff;
}

.actions-pane h2 {
  height: 20px;
  padding-left: 5px;
  border-bottom: 1px solid #a0a0a0;
  background-color: #f0f0f0;
  line-height: 20px;
}

.actions-pane button {
  display: flex;
  align-items: center;
  justify-content: space-between;
  width: 100%;
  height: 25px;
  padding: 0 7px;
}

.actions-pane .group {
  background: linear-gradient(#b9d0ea, #98b2d0);
}

.actions-pane .more {
  padding-left: 31px;
}

.tri-up {
  width: 10px;
  height: 5px;
  background-color: #000;
  clip-path: polygon(50% 0, 100% 100%, 0 100%);
}

.tri-right {
  width: 5px;
  height: 10px;
  background-color: #000;
  clip-path: polygon(0 0, 100% 50%, 0 100%);
}

/* status bar */
.statusbar {
  display: flex;
  height: 23px;
  flex: none;
  padding: 1px 2px 1px 1px;
  border-top: 1px solid #828790;
  background-color: #fff;
}

.cell {
  border-right: 1px solid #d0d0d0;
  background-color: #f1edeb;
}

.cell.wide { flex: 1; }
.cell.mid { width: 133px; }
.cell.small { width: 85px; }

/* task bar */
.taskbar {
  display: flex;
  height: 40px;
  flex: none;
  border-top: 1px solid #1b2540;
  box-shadow: inset 0 1px #8ea7cf;
  background:
    linear-gradient(rgba(255, 255, 255, .1), transparent 30%),
    linear-gradient(90deg, #1d3a75 0%, #1d3a75 3%, #21438c 6%, #21438c 50%, #27529a 72%, #2a589f 86%, #23467f 88%, #1f417c 100%);
}

.taskbar button {
  display: flex;
  align-items: center;
  justify-content: center;
}

.start {
  width: 54px;
}

.task {
  width: 70px;
}

.task + .task {
  width: 52px;
}

.task.running {
  width: 52px;
  margin: 0 2px 0 8px;
  border: 1px solid #14264d;
  border-radius: 3px;
  box-shadow: inset 0 0 0 1px rgba(255, 255, 255, .5);
  background: linear-gradient(135deg, #8ea5cd, #47639f 50%, #4b68a4);
}

.task.stacked {
  box-shadow: inset 0 0 0 1px rgba(255, 255, 255, .5), 3px 0 #31508f, 4px 0 #7f94bd, 7px 0 #2b4b8d, 8px 0 #7f94bd;
}

.task.current {
  width: 60px;
  background: linear-gradient(135deg, #d3dae8, #8d9dc1 50%, #a4b2d0);
}

.tray {
  display: flex;
  align-items: center;
  gap: 8px;
  margin-left: auto;
  color: #fff;
}

.lang {
  margin: 0 8px 5px 0;
}

.taskbar .tray-more {
  width: 8px;
  height: 4px;
  margin-right: 5px;
  background-color: #fff;
  clip-path: polygon(50% 0, 100% 100%, 0 100%);
}

.clock {
  display: flex;
  flex-direction: column;
  width: 62px;
  margin-left: 6px;
  line-height: 17px;
  text-align: center;
}

.taskbar .show-desktop {
  width: 14px;
  height: 39px;
  border: 1px solid #8195b8;
  background: linear-gradient(#5d779f, #1b3768 50%, #27468a);
}

/* context menu, lies over the disk rows */
.context-menu {
  position: absolute;
  left: 599px;
  top: 844px;
  width: 258px;
  padding: 2px;
  border: 1px solid #979797;
  box-shadow: 3px 3px 3px rgba(0, 0, 0, .5), inset 0 0 0 1px #f5f5f5;
  background: linear-gradient(90deg, #f0f0f0 26px, #e2e3e3 26px 27px, #fff 27px 28px, #f0f0f0 28px) 2px 2px / 252px 170px no-repeat #f0f0f0;
}

.context-menu button {
  display: block;
  width: 100%;
  height: 22px;
  padding-left: 32px;
  text-align: left;
}

.context-menu button:disabled {
  color: #6d6d6d;
}

.context-menu hr {
  height: 2px;
  margin: 3px 0 3px 28px;
  border: 0;
  border-top: 1px solid #e0e0e0;
  border-bottom: 1px solid #fff;
}
```
